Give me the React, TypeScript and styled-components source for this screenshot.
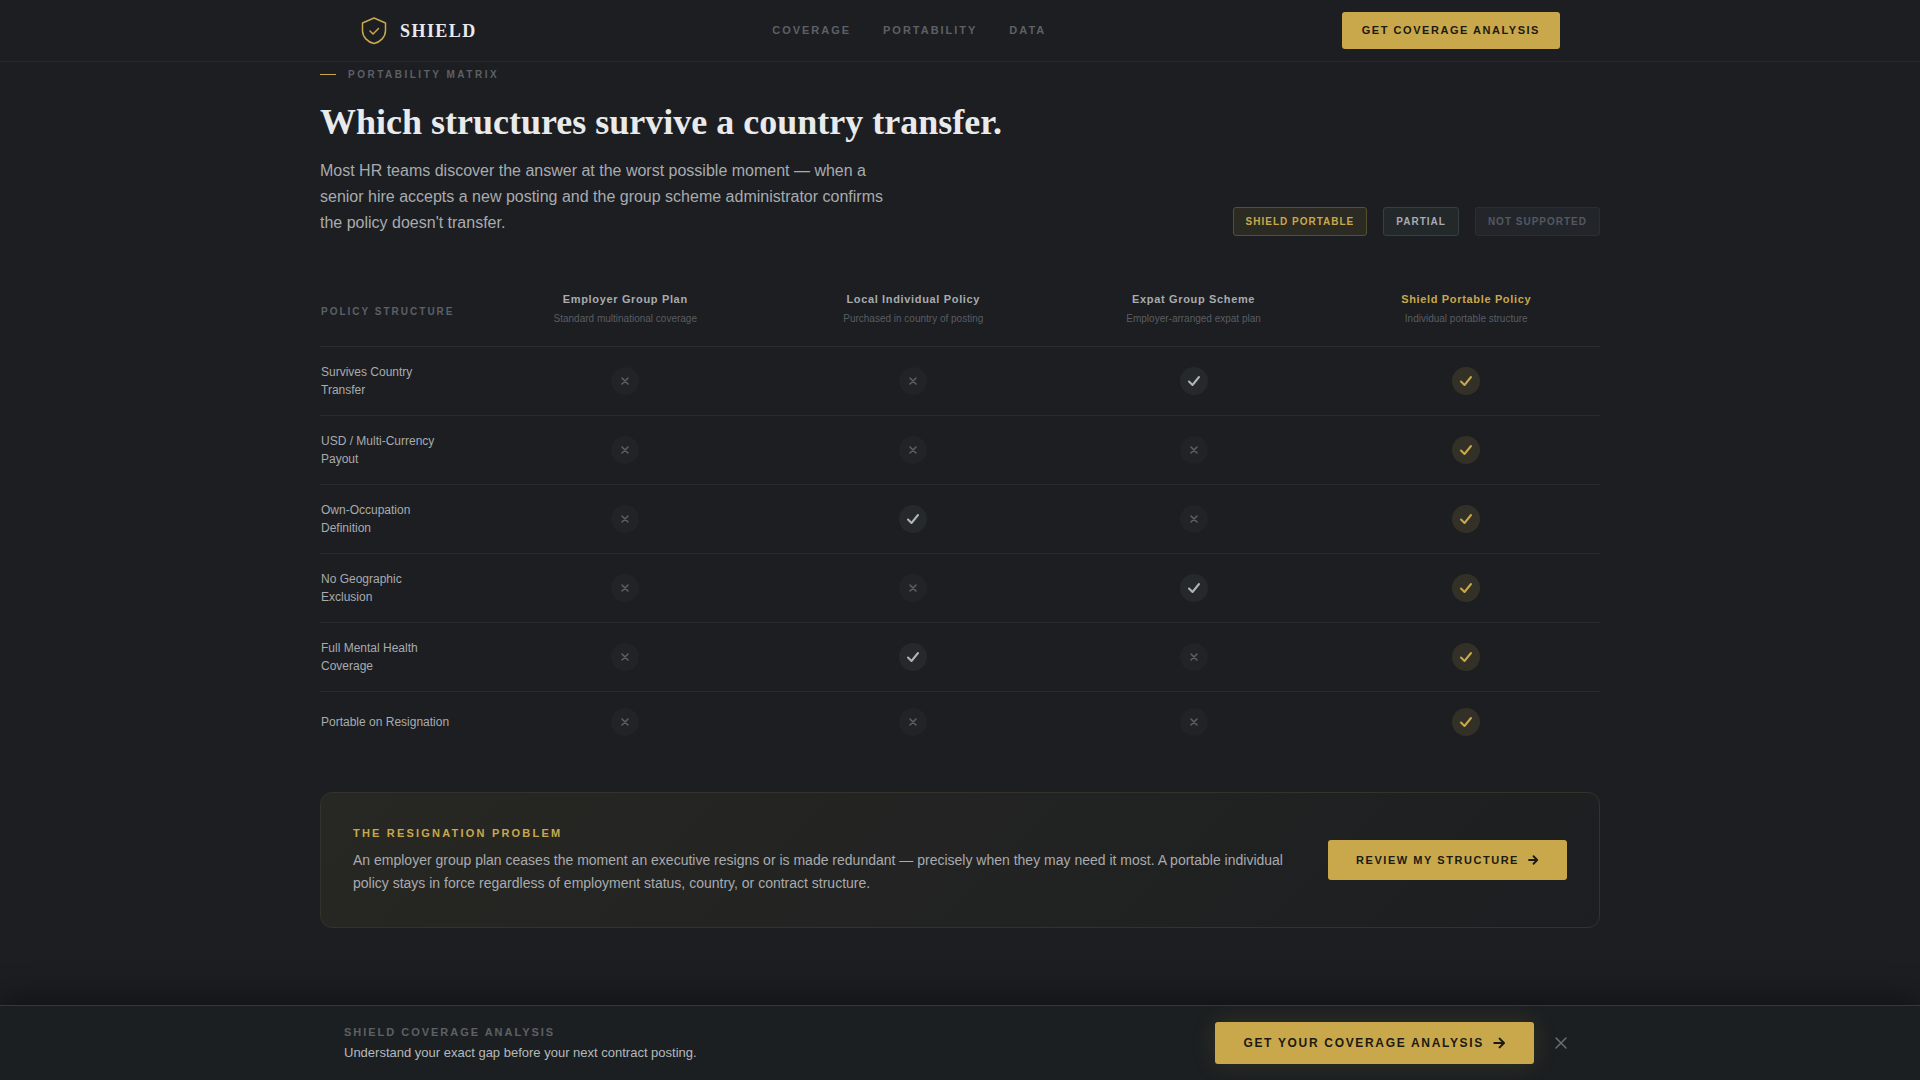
import React from "react";
import styled, { createGlobalStyle, css } from "styled-components";

const gold = "#c9a84c";
const ink = "#1c1e21";
const sans = `"Liberation Sans", Arial, sans-serif`;
const serif = `"Liberation Serif", "Times New Roman", serif`;

const GlobalStyle = createGlobalStyle`
  *, *::before, *::after { box-sizing: border-box; }
  body {
    margin: 0;
    background: ${ink};
    color: #a8abaf;
    font-family: ${sans};
  }
  h1, h2, p { margin: 0; }
`;

const Page = styled.div`
  display: flex;
  flex-direction: column;
  min-height: 100vh;
`;

const Header = styled.header`
  position: sticky;
  top: 0;
  z-index: 2;
  background: #1c1e21;
  border-bottom: 1px solid #26282b;
`;

const HeaderInner = styled.div`
  display: flex;
  align-items: center;
  justify-content: space-between;
  max-width: 1200px;
  margin: 0 auto;
  padding: 12px 0;
`;

const Brand = styled.a`
  display: flex;
  align-items: center;
  gap: 12px;
  color: #e8eaec;
  font: 700 18px/22px ${serif};
  letter-spacing: 0.08em;
  text-decoration: none;
`;

const Nav = styled.nav`
  display: flex;
  gap: 32px;
`;

const NavLink = styled.a`
  color: #5d6067;
  font: 700 11px/15px ${sans};
  letter-spacing: 0.18em;
  text-decoration: none;
`;

const sizes = {
  small: css`
    padding: 12px 20px;
    font-size: 11px;
    line-height: 13px;
    letter-spacing: 0.14em;
  `,
  medium: css`
    padding: 12px 28px;
    font-size: 11px;
    line-height: 16px;
    letter-spacing: 0.14em;
  `,
  large: css`
    padding: 13px 28px;
    font-size: 12px;
    line-height: 16px;
    letter-spacing: 0.14em;
    box-shadow: 0 0 24px rgba(201, 168, 76, 0.15);
  `,
};

const GoldButton = styled.button<{ $size: keyof typeof sizes }>`
  display: inline-flex;
  flex-shrink: 0;
  align-items: center;
  gap: 8px;
  border: 0;
  border-radius: 3px;
  background: ${gold};
  color: #1c1a12;
  font-family: ${sans};
  font-weight: 700;
  white-space: nowrap;
  cursor: pointer;
  ${({ $size }) => sizes[$size]}
`;

const Main = styled.main`
  flex: 1;
  width: 100%;
  max-width: 1280px;
  margin: 0 auto;
  padding-top: 4px;
`;

const Eyebrow = styled.p`
  display: flex;
  align-items: center;
  gap: 12px;
  color: #5d6067;
  font: 700 10px/17px ${sans};
  letter-spacing: 0.25em;

  &::before {
    content: "";
    width: 16px;
    height: 1px;
    background: ${gold};
  }
`;

const Intro = styled.div`
  display: flex;
  align-items: flex-end;
  justify-content: space-between;
  gap: 32px;
  margin-bottom: 40px;
`;

const Title = styled.h1`
  margin: 19px 0 16px;
  color: #e8eaec;
  font: 700 36px/40px ${serif};
`;

const Lead = styled.p`
  max-width: 576px;
  font-size: 16px;
  line-height: 26px;
`;

const Legend = styled.div`
  display: flex;
  gap: 16px;
`;

type Tone = "gold" | "partial" | "none";

const chipTones = {
  gold: css`
    border-color: #55502f;
    background: #2b2b24;
    color: ${gold};
  `,
  partial: css`
    border-color: #393e42;
    background: #23282b;
    color: #a8abaf;
  `,
  none: css`
    border-color: #2b2f35;
    background: #22262b;
    color: #545860;
  `,
};

const Chip = styled.span<{ $tone: Tone }>`
  padding: 6px 12px;
  border: 1px solid;
  border-radius: 3px;
  font: 700 10px/15px ${sans};
  letter-spacing: 0.1em;
  ${({ $tone }) => chipTones[$tone]}
`;

const Matrix = styled.table`
  width: 100%;
  table-layout: fixed;
  border-collapse: separate;
  border-spacing: 0;
`;

const Col = styled.col<{ $share: number }>`
  width: ${({ $share }) => $share}%;
`;

const HeadRow = styled.tr`
  th { border-bottom: 1px solid #2a2c30; }
`;

const Corner = styled.th`
  padding: 2px 1px 0;
  color: #5d6067;
  font: 700 10px/16px ${sans};
  letter-spacing: 0.2em;
  text-align: left;
  white-space: nowrap;
`;

const PlanHead = styled.th<{ $featured: boolean }>`
  padding: 15px 1px 20px;
  color: ${({ $featured }) => ($featured ? gold : "#a8abaf")};
  font: 700 11px/16px ${sans};
  letter-spacing: 0.06em;
`;

const PlanNote = styled.span`
  display: block;
  margin-top: 4px;
  color: #5a5d63;
  font-size: 10px;
  font-weight: 400;
  line-height: 15px;
  letter-spacing: 0;
`;

const Row = styled.tr`
  &:not(:last-child) > * { border-bottom: 1px solid #292b2e; }
`;

const RowHead = styled.th`
  padding: 16px 24px 16px 1px;
  font: 400 12px/18px ${sans};
  text-align: left;
`;

const Cell = styled.td`
  padding: 16px 1px;
`;

const markTones = {
  gold: css`
    background: #333127;
    color: ${gold};
  `,
  partial: css`
    background: #25292c;
    color: #b2b5b8;
  `,
  none: css`
    background: #212327;
    color: #5d6067;
  `,
};

const Mark = styled.span<{ $tone: Tone }>`
  display: flex;
  align-items: center;
  justify-content: center;
  width: 28px;
  height: 28px;
  margin: 0 auto;
  border-radius: 50%;
  ${({ $tone }) => markTones[$tone]}
`;

const Callout = styled.section`
  display: flex;
  align-items: center;
  justify-content: space-between;
  gap: 40px;
  margin: 40px 0 76px;
  padding: 32px;
  border: 1px solid #32332b;
  border-radius: 12px;
  background: linear-gradient(135deg, #272723 0%, #222322 50%, #1c1e21 100%);
`;

const CalloutTitle = styled.h2`
  margin-bottom: 8px;
  color: ${gold};
  font: 700 11px/16px ${sans};
  letter-spacing: 0.2em;
`;

const CalloutText = styled.p`
  font-size: 14px;
  line-height: 23px;
`;

const Banner = styled.footer`
  position: sticky;
  bottom: 0;
  border-top: 1px solid #3b3829;
  background: #1b1f21;
  box-shadow: 0 -8px 32px rgba(0, 0, 0, 0.4);
`;

const BannerInner = styled.div`
  display: flex;
  align-items: center;
  justify-content: space-between;
  max-width: 1280px;
  margin: 0 auto;
  padding: 16px 24px;
`;

const BannerLabel = styled.p`
  color: #5d6067;
  font: 700 11px/19px ${sans};
  letter-spacing: 0.18em;
`;

const BannerText = styled.p`
  color: #b6b9bc;
  font-size: 13px;
  line-height: 21px;
`;

const Actions = styled.div`
  display: flex;
  align-items: center;
  gap: 12px;
`;

const CloseButton = styled.button`
  display: flex;
  padding: 8px;
  border: 0;
  background: none;
  color: #6a6d73;
  cursor: pointer;
`;

const ShieldLogo = () => (
  <svg width="28" height="28" viewBox="0 0 28 28" fill="none" stroke={gold} strokeLinecap="round" strokeLinejoin="round" aria-hidden="true">
    <path d="M14 1L2.5 6V13.5C2.5 20 7.5 25 14 26.5C20.5 25 25.5 20 25.5 13.5V6L14 1Z" strokeWidth="1.5" />
    <path d="M10 14L13 17L18.5 11.5" strokeWidth="1.5" />
  </svg>
);

const Arrow = ({ size }: { size: number }) => (
  <svg width={size} height={size} viewBox="0 0 12 12" fill="none" stroke="currentColor" strokeWidth="1.8" strokeLinecap="round" strokeLinejoin="round" aria-hidden="true">
    <path d="M2 6H10M6.5 2.25L10.25 6L6.5 9.75" />
  </svg>
);

const Check = () => (
  <svg width="14" height="14" viewBox="0 0 14 14" fill="none" stroke="currentColor" strokeWidth="2" strokeLinecap="round" strokeLinejoin="round" aria-hidden="true">
    <path d="M2 7.5L5.5 11L12 3" />
  </svg>
);

const Cross = () => (
  <svg width="10" height="10" viewBox="0 0 10 10" fill="none" stroke="currentColor" strokeWidth="1.5" strokeLinecap="round" aria-hidden="true">
    <path d="M2 2L8 8M8 2L2 8" />
  </svg>
);

const CloseIcon = () => (
  <svg width="14" height="14" viewBox="0 0 14 14" fill="none" stroke="currentColor" strokeWidth="1.5" strokeLinecap="round" aria-hidden="true">
    <path d="M2 2L12 12M12 2L2 12" />
  </svg>
);

const plans = [
  { name: "Employer Group Plan", note: "Standard multinational coverage", share: 22.9 },
  { name: "Local Individual Policy", note: "Purchased in country of posting", share: 22.1 },
  { name: "Expat Group Scheme", note: "Employer-arranged expat plan", share: 21.7 },
  { name: "Shield Portable Policy", note: "Individual portable structure", share: 20.9, featured: true },
];

const rows: { label: string; marks: Tone[] }[] = [
  { label: "Survives Country Transfer", marks: ["none", "none", "partial", "gold"] },
  { label: "USD / Multi-Currency Payout", marks: ["none", "none", "none", "gold"] },
  { label: "Own-Occupation Definition", marks: ["none", "partial", "none", "gold"] },
  { label: "No Geographic Exclusion", marks: ["none", "none", "partial", "gold"] },
  { label: "Full Mental Health Coverage", marks: ["none", "partial", "none", "gold"] },
  { label: "Portable on Resignation", marks: ["none", "none", "none", "gold"] },
];

export default function App() {
  return (
    <Page>
      <GlobalStyle />
      <Header>
        <HeaderInner>
          <Brand href="#">
            <ShieldLogo />
            SHIELD
          </Brand>
          <Nav>
            <NavLink href="#coverage">COVERAGE</NavLink>
            <NavLink href="#portability">PORTABILITY</NavLink>
            <NavLink href="#data">DATA</NavLink>
          </Nav>
          <GoldButton type="button" $size="small">GET COVERAGE ANALYSIS</GoldButton>
        </HeaderInner>
      </Header>

      <Main id="portability">
        <Eyebrow>PORTABILITY MATRIX</Eyebrow>
        <Title>Which structures survive a country transfer.</Title>
        <Intro>
          <Lead>
            Most HR teams discover the answer at the worst possible moment — when a senior hire
            accepts a new posting and the group scheme administrator confirms the policy doesn't
            transfer.
          </Lead>
          <Legend>
            <Chip $tone="gold">SHIELD PORTABLE</Chip>
            <Chip $tone="partial">PARTIAL</Chip>
            <Chip $tone="none">NOT SUPPORTED</Chip>
          </Legend>
        </Intro>

        <Matrix>
          <colgroup>
            <Col $share={12.4} />
            {plans.map((plan) => (
              <Col key={plan.name} $share={plan.share} />
            ))}
          </colgroup>
          <thead>
            <HeadRow>
              <Corner scope="col">POLICY STRUCTURE</Corner>
              {plans.map((plan) => (
                <PlanHead key={plan.name} scope="col" $featured={!!plan.featured}>
                  {plan.name}
                  <PlanNote>{plan.note}</PlanNote>
                </PlanHead>
              ))}
            </HeadRow>
          </thead>
          <tbody>
            {rows.map((row) => (
              <Row key={row.label}>
                <RowHead scope="row">{row.label}</RowHead>
                {row.marks.map((tone, i) => (
                  <Cell key={plans[i].name}>
                    <Mark $tone={tone}>{tone === "none" ? <Cross /> : <Check />}</Mark>
                  </Cell>
                ))}
              </Row>
            ))}
          </tbody>
        </Matrix>

        <Callout>
          <div>
            <CalloutTitle>THE RESIGNATION PROBLEM</CalloutTitle>
            <CalloutText>
              An employer group plan ceases the moment an executive resigns or is made redundant —
              precisely when they may need it most. A portable individual policy stays in force
              regardless of employment status, country, or contract structure.
            </CalloutText>
          </div>
          <GoldButton type="button" $size="medium">
            REVIEW MY STRUCTURE
            <Arrow size={12} />
          </GoldButton>
        </Callout>
      </Main>

      <Banner>
        <BannerInner>
          <div>
            <BannerLabel>SHIELD COVERAGE ANALYSIS</BannerLabel>
            <BannerText>Understand your exact gap before your next contract posting.</BannerText>
          </div>
          <Actions>
            <GoldButton type="button" $size="large">
              GET YOUR COVERAGE ANALYSIS
              <Arrow size={14} />
            </GoldButton>
            <CloseButton type="button" aria-label="Dismiss">
              <CloseIcon />
            </CloseButton>
          </Actions>
        </BannerInner>
      </Banner>
    </Page>
  );
}
